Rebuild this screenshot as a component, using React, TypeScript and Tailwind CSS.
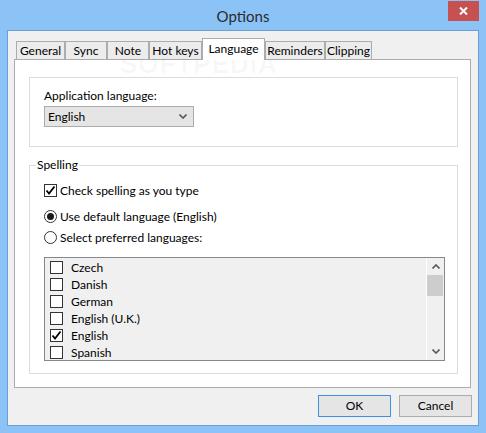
import React from "react";

const font = "font-['Segoe_UI','Lato',sans-serif]";

function Check() {
  return (
    <svg width="11" height="11" viewBox="0 0 11 11" className="block">
      <path d="M1.5 5.5 L4 8.5 L9.5 1.5" fill="none" stroke="#000" strokeWidth="1.8" />
    </svg>
  );
}

function CheckBox({ checked }: { checked?: boolean }) {
  return (
    <div className="w-[13px] h-[13px] border border-[#333333] bg-white flex items-center justify-center shrink-0">
      {checked && <Check />}
    </div>
  );
}

function Radio({ checked }: { checked?: boolean }) {
  return (
    <div className="w-[13px] h-[13px] rounded-full border border-[#333333] bg-white flex items-center justify-center shrink-0">
      {checked && <div className="w-[7px] h-[7px] rounded-full bg-[#1a1a1a]" />}
    </div>
  );
}

function Chevron({ up }: { up?: boolean }) {
  return (
    <svg width="8" height="5" viewBox="0 0 8 5" className="block">
      <path
        d={up ? "M0.5 4.5 L4 1 L7.5 4.5" : "M0.5 0.5 L4 4 L7.5 0.5"}
        fill="none"
        stroke="#5a5a5a"
        strokeWidth="1.6"
      />
    </svg>
  );
}

const tabs: { label: string; w: string; active?: boolean }[] = [
  { label: "General", w: "w-[49px]" },
  { label: "Sync", w: "w-[42px]" },
  { label: "Note", w: "w-[42px]" },
  { label: "Hot keys", w: "w-[53px]" },
  { label: "Language", w: "w-[63px]", active: true },
  { label: "Reminders", w: "w-[60px]" },
  { label: "Clipping", w: "w-[47px]" },
];

const langs: { name: string; checked?: boolean }[] = [
  { name: "Czech" },
  { name: "Danish" },
  { name: "German" },
  { name: "English (U.K.)" },
  { name: "English", checked: true },
  { name: "Spanish" },
];

export default function App() {
  return (
    <div className={`w-[486px] h-[433px] bg-[#8bc3f7] flex flex-col text-[12px] text-black ${font}`}>
      {/* Title bar */}
      <div className="h-[30px] grid grid-cols-[1fr_auto_1fr]">
        <div />
        <div className="text-[15px] text-[#2b2b2b] leading-[30px] pt-[1px]">Options</div>
        <div className="flex justify-end items-start">
          <div className="mt-[1px] mr-[7px] w-[31px] h-[20px] bg-[#c75050] flex items-center justify-center">
            <svg width="9" height="8" viewBox="0 0 9 8" className="block">
              <path d="M1 0.5 L8 7.5 M8 0.5 L1 7.5" stroke="#fff" strokeWidth="2" />
            </svg>
          </div>
        </div>
      </div>

      {/* Client area */}
      <div className="relative mx-[7px] h-[396px] border border-[#6c9ed3] bg-[#f0f0f0] flex flex-col">
        {/* tab row */}
        <div className="relative z-10 mt-[7px] ml-[8px] h-[21px] flex items-end">
          {tabs.map((t) =>
            t.active ? (
              <div
                key={t.label}
                className={`${t.w} h-[22px] -mb-[1px] border border-b-0 border-[#acacac] bg-white flex items-center justify-center pb-[2px]`}
              >
                {t.label}
              </div>
            ) : (
              <div
                key={t.label}
                className={`${t.w} h-[18px] border border-b-0 border-[#acacac] bg-[#ececec] flex items-center justify-center`}
              >
                {t.label}
              </div>
            )
          )}
        </div>

        {/* panel */}
        <div className="ml-[6px] w-[457px] h-[329px] border border-[#acacac] bg-white flex flex-col">
          {/* Application language group */}
          <div className="ml-[14px] mt-[17px] w-[429px] h-[70px] border border-[#dcdcdc] flex flex-col">
            <div className="ml-[14px] mt-[10px] leading-[15px]">Application language:</div>
            <div className="ml-[14px] mt-[3px] w-[150px] h-[21px] border border-[#acacac] bg-[#e5e5e5] flex items-center justify-between pl-[3px] pr-[6px]">
              <span>English</span>
              <Chevron />
            </div>
          </div>

          {/* Spelling group */}
          <div className="relative ml-[14px] mt-[18px] w-[429px] h-[209px] border border-[#dcdcdc] flex flex-col">
            <div className="absolute left-[6px] -top-[9px] bg-white px-[1px] leading-[15px]">Spelling</div>

            <div className="ml-[14px] mt-[17px] h-[15px] flex items-center gap-[3px]">
              <CheckBox checked />
              <span>Check spelling as you type</span>
            </div>
            <div className="ml-[14px] mt-[11px] h-[15px] flex items-center gap-[3px]">
              <Radio checked />
              <span>Use default language (English)</span>
            </div>
            <div className="ml-[14px] mt-[6px] h-[15px] flex items-center gap-[3px]">
              <Radio />
              <span>Select preferred languages:</span>
            </div>

            {/* list box */}
            <div className="ml-[14px] mt-[12px] w-[401px] h-[104px] border border-[#828790] bg-[#f0f0f0] flex">
              <div className="flex-1 flex flex-col pt-[1px]">
                {langs.map((l) => (
                  <div key={l.name} className="h-[17px] flex items-center pl-[5px] gap-[8px]">
                    <CheckBox checked={l.checked} />
                    <span>{l.name}</span>
                  </div>
                ))}
              </div>
              <div className="w-[18px] border-l border-white bg-[#f0f0f0] flex flex-col items-center">
                <div className="h-[17px] flex items-center justify-center">
                  <Chevron up />
                </div>
                <div className="w-[16px] h-[21px] bg-[#cdcdcd] ml-[-1px]" />
                <div className="flex-1" />
                <div className="h-[17px] flex items-center justify-center">
                  <Chevron />
                </div>
              </div>
            </div>
          </div>
        </div>

        {/* buttons */}
        <div className="mt-[7px] mr-[6px] flex justify-end gap-[8px]">
          <div className="w-[73px] h-[22px] border border-[#3c8fe3] bg-[#e5e5e5] flex items-center justify-center">
            OK
          </div>
          <div className="w-[73px] h-[22px] border border-[#acacac] bg-[#e5e5e5] flex items-center justify-center">
            Cancel
          </div>
        </div>

        {/* watermark */}
        <div
          aria-hidden="true"
          className="pointer-events-none absolute left-[112px] top-[14px] text-[26px] font-bold tracking-[1px] text-black/[0.035] font-['Liberation_Sans',sans-serif]"
        >
          SOFTPEDIA
        </div>
      </div>
    </div>
  );
}
